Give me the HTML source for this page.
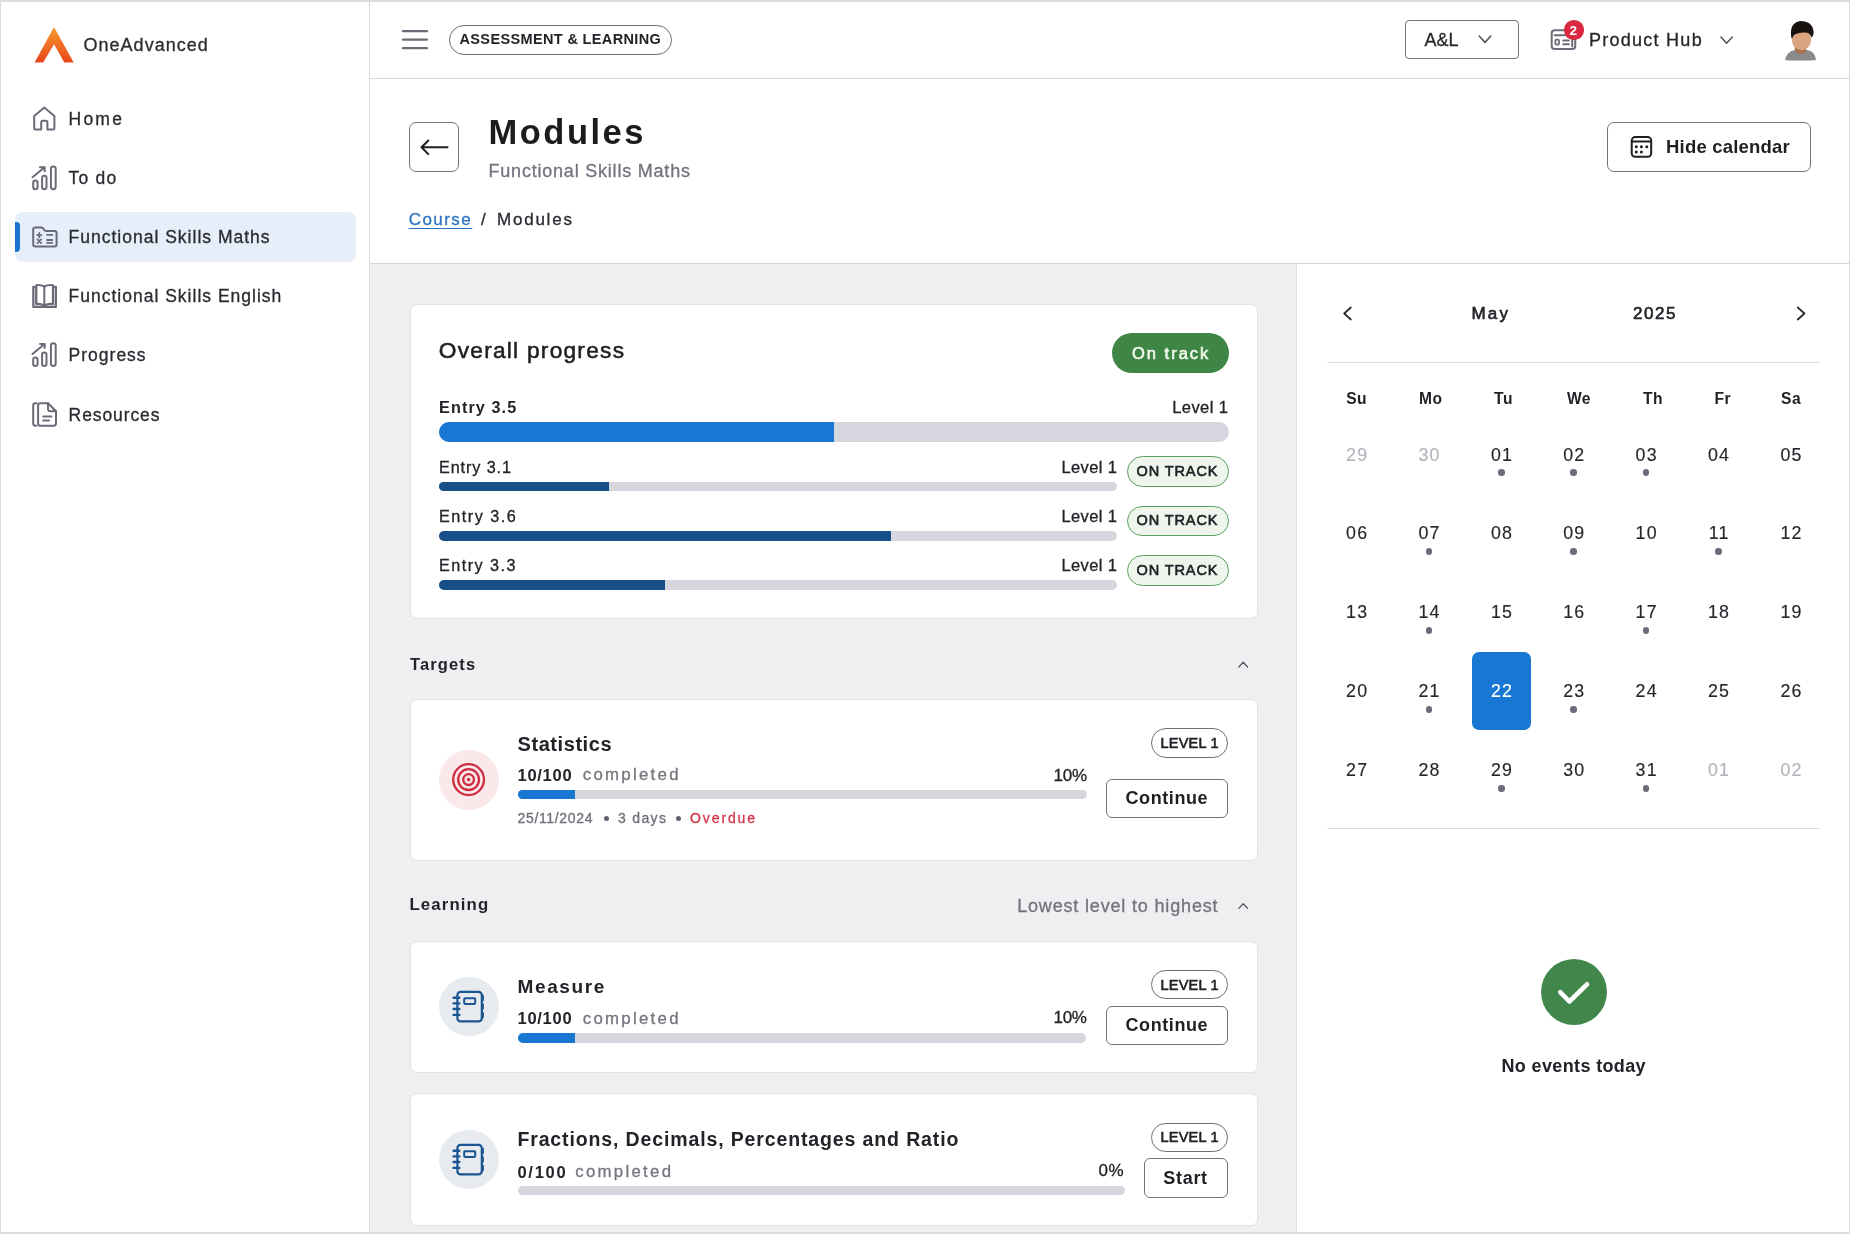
<!DOCTYPE html>
<html>
<head>
<meta charset="utf-8">
<style>
*{box-sizing:border-box;margin:0;padding:0}
html,body{width:1850px;height:1234px;overflow:hidden;background:#fff}
body{position:relative;will-change:transform;font-family:"Liberation Sans",sans-serif;color:#26262c}
.a{position:absolute}
.t{position:absolute;line-height:1;white-space:nowrap}
svg{position:absolute;overflow:visible}
.frame{position:absolute;left:0;top:0;width:1850px;height:1234px;border-style:solid;border-color:#dcdce0;border-width:2px 1px 2px 1px;pointer-events:none;z-index:50}
/* sidebar */
.side{left:0;top:0;width:370px;height:1234px;background:#fff;border-right:1px solid #d9d9de}
.nav{font-size:17.5px;color:#2a2a31;letter-spacing:1px}
/* header */
.hdr{left:370px;top:0;width:1480px;height:79px;background:#fff;border-bottom:1px solid #d6d6db}
.phdr{left:370px;top:79px;width:1480px;height:185px;background:#fff;border-bottom:1px solid #d3d3d8}
.main{left:370px;top:264px;width:926px;height:970px;background:#efeff1}
.cal{left:1296px;top:264px;width:554px;height:970px;background:#fff;border-left:1px solid #e0e0e4}
.card{position:absolute;left:410px;width:848px;background:#fff;border:1px solid #e2e2e6;border-radius:7px}
.track{position:absolute;background:#d6d6df;border-radius:6px;overflow:hidden}
.fill{position:absolute;left:0;top:0;bottom:0}
.btn{position:absolute;border:1.5px solid #74747e;border-radius:6px;background:#fff}
.pill{position:absolute;border:1.5px solid #6e6e78;border-radius:20px;background:#fff}
.t{-webkit-text-stroke:0.3px currentColor}
.sb{font-weight:700;-webkit-text-stroke:0}
</style>
</head>
<body>

<!-- SIDEBAR -->
<div class="a side"></div>
<svg style="left:0;top:0" width="100" height="80">
  <defs><linearGradient id="lg" x1="0" y1="0" x2="0" y2="1"><stop offset="0" stop-color="#f7992c"/><stop offset="1" stop-color="#e8461c"/></linearGradient></defs>
  <path d="M54 27 L73.7 62.6 L64.3 62.6 L54 44.2 L43.2 62.6 L34.6 62.6 Z" fill="url(#lg)"/>
</svg>
<div class="t" style="left:83.6px;top:35.5px;font-size:18px;letter-spacing:1px;color:#2b2b31">OneAdvanced</div>

<div class="a" style="left:15px;top:212px;width:341px;height:50px;background:#e5eef9;border-radius:8px"></div>
<div class="a" style="left:14.8px;top:222px;width:5px;height:30px;background:#1675d2;border-radius:0 3.5px 4px 0"></div>

<!-- nav icons -->
<svg style="left:0;top:0" width="70" height="440" fill="none" stroke="#6b6b78" stroke-width="2" stroke-linejoin="round" stroke-linecap="round">
  <!-- home -->
  <path d="M34.2 116 L44.3 107.5 L54.4 116 L54.4 128.4 Q54.4 129.5 53.3 129.5 L47.4 129.5 L47.4 122.5 Q47.4 120.8 45.7 120.8 L42.9 120.8 Q41.2 120.8 41.2 122.5 L41.2 129.5 L35.3 129.5 Q34.2 129.5 34.2 128.4 Z"/>
  <!-- to do -->
  <rect x="33.2" y="180.6" width="4.4" height="8.6" rx="2.2"/>
  <rect x="42.1" y="175.7" width="4.4" height="13.5" rx="2.2"/>
  <rect x="50.9" y="166.4" width="4.8" height="22.8" rx="2.4"/>
  <path d="M32.5 177.2 L44.6 167.3 M40 167.2 L44.7 167.2 L44.7 171.3"/>
  <!-- folder maths -->
  <path d="M33.2 229.5 Q33.2 227.5 35.2 227.5 L41.5 227.5 Q42.5 227.5 43.3 228.6 L44.3 230 Q45 231 46 231 L54.6 231 Q56.6 231 56.6 233 L56.6 244.5 Q56.6 246.5 54.6 246.5 L35.2 246.5 Q33.2 246.5 33.2 244.5 Z"/>
  <path d="M37.2 235.2 L41.4 235.2 M39.3 233 L39.3 237.4 M37.4 239.4 L41.2 243 M41.2 239.4 L37.4 243 M47 234.8 L52.3 234.8 M47 240 L52.3 240 M47 242.8 L52.3 242.8" stroke-width="1.8"/>
  <!-- book english -->
  <path d="M33.2 286.8 L36.4 286.8 L36.4 303.9 Q40.5 303.5 44.3 305.5 Q48 303.5 52.9 303.9 L52.9 286.8 L56 286.8 L56 306.9 L33.2 306.9 Z" fill="#c7c7d2"/>
  <path d="M36.4 285.2 Q40.5 284.6 44.3 286.5 Q48 284.6 52.9 285.2 L52.9 303.9 Q48 303.3 44.3 305.3 Q40.5 303.3 36.4 303.9 Z" fill="#fff"/>
  <path d="M44.3 286.5 L44.3 305.3"/>
  <!-- progress -->
  <rect x="33.2" y="357.4" width="4.4" height="8.6" rx="2.2"/>
  <rect x="42.1" y="352.5" width="4.4" height="13.5" rx="2.2"/>
  <rect x="50.9" y="343.2" width="4.8" height="22.8" rx="2.4"/>
  <path d="M32.5 354 L44.6 344.1 M40 344 L44.7 344 L44.7 348.1"/>
  <!-- resources -->
  <path d="M36.5 403.2 L35.3 403.2 Q33.2 403.2 33.2 405.3 L33.2 423.6 Q33.2 425.7 35.3 425.7 L36.5 425.7"/>
  <path d="M40.2 403.3 L48 403.3 L56 411.3 L56 423.6 Q56 425.7 53.9 425.7 L40.2 425.7 Q38.1 425.7 38.1 423.6 L38.1 405.4 Q38.1 403.3 40.2 403.3 Z"/>
  <path d="M48 403.3 L48 408.8 Q48 411.3 50.5 411.3 L56 411.3"/>
  <path d="M43.2 416.4 L51.4 416.4 M43.2 420.6 L49 420.6"/>
</svg>

<div class="t nav" style="left:68.6px;top:110.5px;letter-spacing:2.2px">Home</div>
<div class="t nav" style="left:68.6px;top:169.7px;letter-spacing:1.2px">To do</div>
<div class="t nav" style="left:68.6px;top:228.9px">Functional Skills Maths</div>
<div class="t nav" style="left:68.6px;top:288.1px">Functional Skills English</div>
<div class="t nav" style="left:68.6px;top:347.3px">Progress</div>
<div class="t nav" style="left:68.6px;top:406.5px;letter-spacing:0.9px">Resources</div>

<!-- HEADER -->
<div class="a hdr"></div>
<svg style="left:0;top:0" width="440" height="60" stroke="#6b6b78" stroke-width="2.2" stroke-linecap="round">
  <path d="M403 31.2 L427 31.2 M403 39.6 L427 39.6 M403 48.2 L427 48.2"/>
</svg>
<div class="pill" style="left:449px;top:25px;width:223px;height:30px"></div>
<div class="t sb" style="left:459.5px;top:32.4px;font-size:14.5px;letter-spacing:0.36px;color:#222228">ASSESSMENT &amp; LEARNING</div>

<div class="btn" style="left:1405px;top:20px;width:114px;height:39px;border-radius:4px"></div>
<div class="t" style="left:1424.5px;top:30.8px;font-size:18px;color:#26262c">A&amp;L</div>
<svg style="left:0;top:0" width="1850" height="60" fill="none" stroke="#55555f" stroke-width="1.6" stroke-linecap="round" stroke-linejoin="round">
  <path d="M1479.2 36 L1485 42.4 L1490.8 36"/>
  <path d="M1721 37 L1726.6 43.2 L1732.3 37"/>
  <!-- product hub icon -->
  <rect x="1551.7" y="30.3" width="23.6" height="18.7" rx="3" stroke="#6b6b78" stroke-width="2"/>
  <path d="M1554.6 35.3 L1565 35.3 M1563.2 40.4 L1568.8 40.4 M1563.2 44.2 L1568.8 44.2 M1572.2 39.8 L1572.2 46.3" stroke="#6b6b78" stroke-width="2"/>
  <rect x="1555.4" y="39.6" width="3.6" height="5" rx="1" stroke="#6b6b78" stroke-width="1.8"/>
</svg>
<div class="a" style="left:1564.1px;top:20px;width:19.6px;height:19.6px;border-radius:50%;background:#d9283f"></div>
<div class="t sb" style="left:1569.6px;top:24px;font-size:13.5px;color:#fff">2</div>
<div class="t" style="left:1589px;top:30.8px;font-size:18px;letter-spacing:1.26px;color:#26262c">Product Hub</div>

<!-- avatar -->
<svg style="left:1770px;top:10px" width="60" height="60">
  <path d="M15 50 Q17 41 25 40 L37 40 Q45 41 46 50 L46 50 Q44 50.5 30.5 50.5 Q17 50.5 15 50 Z" fill="#8a8a8c"/>
  <path d="M24.5 36 L36.5 36 L36 41.5 Q30.5 46 25 41.5 Z" fill="#a8714f"/>
  <ellipse cx="31.5" cy="30" rx="9.6" ry="10.2" fill="#d9a47f"/>
  <path d="M21 25 Q20 12.5 30.5 11 Q42 10.8 43.5 21 Q43.8 26 41.5 27.5 Q40 23 36 22.5 Q28 22 24 25 Q22.5 27 22 29 Q21 27.5 21 25 Z" fill="#17110f"/>
</svg>

<!-- PAGE HEADER -->
<div class="a phdr"></div>
<div class="btn" style="left:409px;top:122px;width:50px;height:50px;border-radius:7px"></div>
<svg style="left:0;top:0" width="460" height="180" fill="none" stroke="#1f1f24" stroke-width="2" stroke-linecap="round" stroke-linejoin="round">
  <path d="M421.5 147.3 L447.5 147.3 M428.3 140.5 L421.5 147.3 L428.3 154.1"/>
</svg>
<div class="t sb" style="left:488.5px;top:115.3px;font-size:34.5px;letter-spacing:2.5px;color:#1c1c20">Modules</div>
<div class="t" style="left:488.5px;top:161.5px;font-size:18px;letter-spacing:0.79px;color:#73737e">Functional Skills Maths</div>
<div class="t" style="left:408.7px;top:211.4px;font-size:17px;letter-spacing:1.46px;color:#2c73c2;text-decoration:underline;text-underline-offset:3px;text-decoration-thickness:1px">Course</div>
<div class="t" style="left:481px;top:211.4px;font-size:17px;color:#2a2a31">/</div>
<div class="t" style="left:497px;top:211.4px;font-size:17px;letter-spacing:1.77px;color:#2a2a31">Modules</div>

<div class="btn" style="left:1607px;top:122px;width:204px;height:50px;border-radius:7px"></div>
<svg style="left:0;top:0" width="1700" height="180" fill="none" stroke="#1f1f24" stroke-width="2">
  <rect x="1631.7" y="137.1" width="19.5" height="19.6" rx="3.5"/>
  <path d="M1631.7 141.5 L1651.2 141.5"/>
  <g fill="#1f1f24" stroke="none">
    <circle cx="1636.3" cy="146.7" r="1.5"/><circle cx="1641.4" cy="146.7" r="1.5"/><circle cx="1646.8" cy="146.7" r="1.5"/>
    <circle cx="1636.3" cy="152.1" r="1.5"/><circle cx="1641.4" cy="152.1" r="1.5"/>
  </g>
</svg>
<div class="t sb" style="left:1666px;top:137.6px;font-size:18.5px;letter-spacing:0.2px;color:#1f1f24">Hide calendar</div>

<!-- MAIN -->
<div class="a main"></div>

<!-- Overall progress card -->
<div class="card" style="top:304px;height:315px"></div>
<div class="t" style="left:438.8px;top:339px;font-size:22.7px;letter-spacing:1.25px;-webkit-text-stroke:0.55px currentColor;color:#1f1f24">Overall progress</div>
<div class="a" style="left:1112px;top:333px;width:117px;height:40px;border-radius:20px;background:#3f8545"></div>
<div class="t" style="left:1132px;top:345.1px;font-size:16.5px;letter-spacing:2px;-webkit-text-stroke:0.6px currentColor;color:#f1f8ec">On track</div>

<div class="t sb" style="left:439px;top:399.3px;font-size:16.2px;letter-spacing:1.1px;color:#222228">Entry 3.5</div>
<div class="t" style="left:1172.3px;top:399.1px;font-size:16.5px;letter-spacing:0.4px;color:#222228">Level 1</div>
<div class="track" style="left:439px;top:422px;width:790px;height:20px;border-radius:10px"><div class="fill" style="width:395px;background:#1777d2"></div></div>

<div class="t" style="left:439px;top:458.7px;font-size:16.2px;letter-spacing:0.9px;color:#222228">Entry 3.1</div>
<div class="t" style="left:1061.4px;top:458.5px;font-size:16.5px;letter-spacing:0.4px;color:#222228">Level 1</div>
<div class="track" style="left:439px;top:481.5px;width:678px;height:9.5px"><div class="fill" style="width:169.5px;background:#175089"></div></div>
<div class="a" style="left:1127px;top:456px;width:101.5px;height:30.5px;border-radius:16px;background:#eef5ec;border:1.3px solid #5d9f5f"></div>
<div class="t" style="left:1136.5px;top:463.5px;font-size:14.5px;letter-spacing:0.9px;-webkit-text-stroke:0.6px currentColor;color:#222228">ON TRACK</div>

<div class="t" style="left:439px;top:507.9px;font-size:16.2px;letter-spacing:1.5px;color:#222228">Entry 3.6</div>
<div class="t" style="left:1061.4px;top:507.9px;font-size:16.5px;letter-spacing:0.4px;color:#222228">Level 1</div>
<div class="track" style="left:439px;top:531px;width:678px;height:9.5px"><div class="fill" style="width:451.5px;background:#175089"></div></div>
<div class="a" style="left:1127px;top:505.5px;width:101.5px;height:30.5px;border-radius:16px;background:#eef5ec;border:1.3px solid #5d9f5f"></div>
<div class="t" style="left:1136.5px;top:513px;font-size:14.5px;letter-spacing:0.9px;-webkit-text-stroke:0.6px currentColor;color:#222228">ON TRACK</div>

<div class="t" style="left:439px;top:557.3px;font-size:16.2px;letter-spacing:1.45px;color:#222228">Entry 3.3</div>
<div class="t" style="left:1061.4px;top:557.3px;font-size:16.5px;letter-spacing:0.4px;color:#222228">Level 1</div>
<div class="track" style="left:439px;top:580.3px;width:678px;height:9.5px"><div class="fill" style="width:225.5px;background:#175089"></div></div>
<div class="a" style="left:1127px;top:555px;width:101.5px;height:30.5px;border-radius:16px;background:#eef5ec;border:1.3px solid #5d9f5f"></div>
<div class="t" style="left:1136.5px;top:562.5px;font-size:14.5px;letter-spacing:0.9px;-webkit-text-stroke:0.6px currentColor;color:#222228">ON TRACK</div>

<!-- Targets -->
<div class="t sb" style="left:410px;top:656.3px;font-size:16.5px;letter-spacing:1.13px;color:#222228">Targets</div>
<svg style="left:0;top:0" width="1260" height="920" fill="none" stroke="#55555f" stroke-width="1.3" stroke-linecap="round" stroke-linejoin="round">
  <path d="M1238.8 667 L1243.2 662.3 L1247.6 667"/>
  <path d="M1238.8 908.4 L1243.2 903.7 L1247.6 908.4"/>
</svg>
<div class="card" style="top:699px;height:162px"></div>
<div class="a" style="left:439px;top:750px;width:59.5px;height:59.5px;border-radius:50%;background:#fbe8ea"></div>
<svg style="left:0;top:0" width="520" height="820" fill="none" stroke="#cd2f40" stroke-width="2.3">
  <circle cx="468.6" cy="779.6" r="15.4"/>
  <circle cx="468.6" cy="779.6" r="10.4"/>
  <circle cx="468.6" cy="779.6" r="5.4"/>
  <circle cx="468.6" cy="779.6" r="1.8" fill="#cd2f40" stroke="none"/>
</svg>
<div class="t sb" style="left:517.5px;top:734.4px;font-size:20px;letter-spacing:0.57px;color:#222228">Statistics</div>
<div class="t sb" style="left:517.5px;top:766.5px;font-size:16.5px;letter-spacing:0.72px;color:#222228">10/100</div>
<div class="t" style="left:582.7px;top:767.2px;font-size:16.8px;letter-spacing:2.3px;color:#75757f">completed</div>
<div class="t" style="left:1053.6px;top:766.7px;font-size:17px;letter-spacing:-0.3px;color:#222228">10%</div>
<div class="track" style="left:518px;top:789.7px;width:568.5px;height:9.5px"><div class="fill" style="width:57px;background:#1777d2"></div></div>
<div class="t" style="left:517.5px;top:810.7px;font-size:14px;letter-spacing:0.66px;color:#6f6f79">25/11/2024</div>
<div class="a" style="left:604.2px;top:815.7px;width:5px;height:5px;border-radius:50%;background:#62626e"></div>
<div class="t" style="left:618px;top:810.7px;font-size:14px;letter-spacing:1.34px;color:#6f6f79">3 days</div>
<div class="a" style="left:675.5px;top:815.7px;width:5px;height:5px;border-radius:50%;background:#62626e"></div>
<div class="t" style="left:690px;top:810.7px;font-size:14px;letter-spacing:1.9px;color:#d33447">Overdue</div>
<div class="pill" style="left:1151px;top:728px;width:77px;height:29.5px;border-width:1.3px"></div>
<div class="t" style="left:1160.6px;top:735.8px;font-size:14.5px;letter-spacing:0.2px;-webkit-text-stroke:0.6px currentColor;color:#222228">LEVEL 1</div>
<div class="btn" style="left:1106px;top:779px;width:122px;height:39px"></div>
<div class="t sb" style="left:1125.5px;top:789.1px;font-size:18px;letter-spacing:0.59px;color:#1f1f24">Continue</div>

<!-- Learning -->
<div class="t sb" style="left:409.4px;top:897.4px;font-size:16.8px;letter-spacing:1.14px;color:#222228">Learning</div>
<div class="t" style="left:1017.2px;top:896.8px;font-size:18px;letter-spacing:0.83px;color:#73737d">Lowest level to highest</div>

<div class="card" style="top:940.5px;height:132px"></div>
<div class="a" style="left:439px;top:977px;width:59.5px;height:59px;border-radius:50%;background:#e7ebf0"></div>

<div class="t sb" style="left:517.5px;top:976.7px;font-size:19px;letter-spacing:1.63px;color:#222228">Measure</div>
<div class="t sb" style="left:517.5px;top:1010px;font-size:16.5px;letter-spacing:0.72px;color:#222228">10/100</div>
<div class="t" style="left:582.7px;top:1010.7px;font-size:16.8px;letter-spacing:2.3px;color:#75757f">completed</div>
<div class="t" style="left:1053.5px;top:1009px;font-size:17px;letter-spacing:-0.3px;color:#222228">10%</div>
<div class="track" style="left:518px;top:1033px;width:568px;height:9.5px"><div class="fill" style="width:57px;background:#1777d2"></div></div>
<div class="pill" style="left:1151px;top:970px;width:77px;height:29px;border-width:1.3px"></div>
<div class="t" style="left:1160.6px;top:977.5px;font-size:14.5px;letter-spacing:0.2px;-webkit-text-stroke:0.6px currentColor;color:#222228">LEVEL 1</div>
<div class="btn" style="left:1106px;top:1005.5px;width:122px;height:39px"></div>
<div class="t sb" style="left:1125.5px;top:1016.2px;font-size:18px;letter-spacing:0.59px;color:#1f1f24">Continue</div>

<div class="card" style="top:1093px;height:133px"></div>
<div class="a" style="left:439px;top:1130px;width:59.5px;height:59px;border-radius:50%;background:#e7ebf0"></div>
<svg style="left:0;top:0" width="520" height="1234" fill="none" stroke="#1b5591" stroke-width="2.2" stroke-linecap="round" stroke-linejoin="round">
  <g>
    <rect x="457.4" y="991.8" width="24.4" height="29.6" rx="3.2"/>
    <rect x="464.2" y="998.3" width="11" height="5.6" rx="0.8" stroke-width="2"/>
    <path d="M453.6 997.8 L459.3 997.8 M453.6 1003.4 L459.3 1003.4 M453.6 1009 L459.3 1009 M453.6 1014.9 L459.3 1014.9" stroke-width="2.4"/>
    <path d="M482.6 996 L482.6 1000 M482.6 1004.5 L482.6 1008.5 M482.6 1013 L482.6 1017" stroke-width="2.6"/>
  </g>
  <g transform="translate(0,153)">
    <rect x="457.4" y="991.8" width="24.4" height="29.6" rx="3.2"/>
    <rect x="464.2" y="998.3" width="11" height="5.6" rx="0.8" stroke-width="2"/>
    <path d="M453.6 997.8 L459.3 997.8 M453.6 1003.4 L459.3 1003.4 M453.6 1009 L459.3 1009 M453.6 1014.9 L459.3 1014.9" stroke-width="2.4"/>
    <path d="M482.6 996 L482.6 1000 M482.6 1004.5 L482.6 1008.5 M482.6 1013 L482.6 1017" stroke-width="2.6"/>
  </g>
</svg>
<div class="t sb" style="left:517.4px;top:1130.4px;font-size:19.5px;letter-spacing:0.87px;color:#222228">Fractions, Decimals, Percentages and Ratio</div>
<div class="t sb" style="left:517.4px;top:1163.8px;font-size:16.5px;letter-spacing:1.75px;color:#222228">0/100</div>
<div class="t" style="left:575.2px;top:1164.3px;font-size:16.8px;letter-spacing:2.3px;color:#75757f">completed</div>
<div class="t" style="left:1098.5px;top:1162.2px;font-size:17px;letter-spacing:0.5px;color:#222228">0%</div>
<div class="track" style="left:518px;top:1185.8px;width:606.5px;height:9px"></div>
<div class="pill" style="left:1151px;top:1122.5px;width:77px;height:29.5px;border-width:1.3px"></div>
<div class="t" style="left:1160.6px;top:1130.1px;font-size:14.5px;letter-spacing:0.2px;-webkit-text-stroke:0.6px currentColor;color:#222228">LEVEL 1</div>
<div class="btn" style="left:1144px;top:1158.3px;width:84px;height:39.5px"></div>
<div class="t sb" style="left:1163.3px;top:1168.8px;font-size:18px;letter-spacing:0.7px;color:#1f1f24">Start</div>

<!-- CALENDAR -->
<div class="a cal"></div>
<svg style="left:0;top:0" width="1850" height="340" fill="none" stroke="#2a2a31" stroke-width="1.8" stroke-linecap="round" stroke-linejoin="round">
  <path d="M1350.8 307.5 L1344.2 313.5 L1350.8 319.5"/>
  <path d="M1797.8 307.5 L1804.4 313.5 L1797.8 319.5"/>
</svg>
<div class="t" style="left:1471.4px;top:305.2px;font-size:17px;letter-spacing:2.3px;-webkit-text-stroke:0.6px currentColor;color:#222228">May</div>
<div class="t" style="left:1632.9px;top:305.2px;font-size:17px;letter-spacing:1.6px;-webkit-text-stroke:0.6px currentColor;color:#222228">2025</div>
<div class="a" style="left:1327px;top:362px;width:493px;height:1px;background:#dcdce0"></div>
<div class="a" style="left:1327px;top:828px;width:493px;height:1px;background:#dcdce0"></div>

<div class="t sb" style="left:1316.6px;width:80px;text-align:center;top:390.7px;font-size:15.6px;letter-spacing:0.5px;color:#222228">Su</div>
<div class="t sb" style="left:1390.7px;width:80px;text-align:center;top:390.7px;font-size:15.6px;letter-spacing:0.5px;color:#222228">Mo</div>
<div class="t sb" style="left:1463.5px;width:80px;text-align:center;top:390.7px;font-size:15.6px;letter-spacing:0.5px;color:#222228">Tu</div>
<div class="t sb" style="left:1539px;width:80px;text-align:center;top:390.7px;font-size:15.6px;letter-spacing:0.5px;color:#222228">We</div>
<div class="t sb" style="left:1613px;width:80px;text-align:center;top:390.7px;font-size:15.6px;letter-spacing:0.5px;color:#222228">Th</div>
<div class="t sb" style="left:1682.8px;width:80px;text-align:center;top:390.7px;font-size:15.6px;letter-spacing:0.5px;color:#222228">Fr</div>
<div class="t sb" style="left:1751.1px;width:80px;text-align:center;top:390.7px;font-size:15.6px;letter-spacing:0.5px;color:#222228">Sa</div>
<div class="t" style="left:1316.6px;width:80px;text-align:center;top:446.5px;font-size:17.8px;letter-spacing:1.2px;text-indent:1.2px;-webkit-text-stroke:0.15px currentColor;color:#b3b3bb">29</div>
<div class="t" style="left:1389.0px;width:80px;text-align:center;top:446.5px;font-size:17.8px;letter-spacing:1.2px;text-indent:1.2px;-webkit-text-stroke:0.15px currentColor;color:#b3b3bb">30</div>
<div class="t" style="left:1461.4px;width:80px;text-align:center;top:446.5px;font-size:17.8px;letter-spacing:1.2px;text-indent:1.2px;-webkit-text-stroke:0.15px currentColor;color:#26262c">01</div>
<div class="a" style="left:1498.1px;top:469.2px;width:6.6px;height:6.6px;border-radius:50%;background:#6b6b7b"></div>
<div class="t" style="left:1533.7px;width:80px;text-align:center;top:446.5px;font-size:17.8px;letter-spacing:1.2px;text-indent:1.2px;-webkit-text-stroke:0.15px currentColor;color:#26262c">02</div>
<div class="a" style="left:1570.4px;top:469.2px;width:6.6px;height:6.6px;border-radius:50%;background:#6b6b7b"></div>
<div class="t" style="left:1606.1px;width:80px;text-align:center;top:446.5px;font-size:17.8px;letter-spacing:1.2px;text-indent:1.2px;-webkit-text-stroke:0.15px currentColor;color:#26262c">03</div>
<div class="a" style="left:1642.8px;top:469.2px;width:6.6px;height:6.6px;border-radius:50%;background:#6b6b7b"></div>
<div class="t" style="left:1678.5px;width:80px;text-align:center;top:446.5px;font-size:17.8px;letter-spacing:1.2px;text-indent:1.2px;-webkit-text-stroke:0.15px currentColor;color:#26262c">04</div>
<div class="t" style="left:1750.9px;width:80px;text-align:center;top:446.5px;font-size:17.8px;letter-spacing:1.2px;text-indent:1.2px;-webkit-text-stroke:0.15px currentColor;color:#26262c">05</div>
<div class="t" style="left:1316.6px;width:80px;text-align:center;top:525.4px;font-size:17.8px;letter-spacing:1.2px;text-indent:1.2px;-webkit-text-stroke:0.15px currentColor;color:#26262c">06</div>
<div class="t" style="left:1389.0px;width:80px;text-align:center;top:525.4px;font-size:17.8px;letter-spacing:1.2px;text-indent:1.2px;-webkit-text-stroke:0.15px currentColor;color:#26262c">07</div>
<div class="a" style="left:1425.7px;top:548.1px;width:6.6px;height:6.6px;border-radius:50%;background:#6b6b7b"></div>
<div class="t" style="left:1461.4px;width:80px;text-align:center;top:525.4px;font-size:17.8px;letter-spacing:1.2px;text-indent:1.2px;-webkit-text-stroke:0.15px currentColor;color:#26262c">08</div>
<div class="t" style="left:1533.7px;width:80px;text-align:center;top:525.4px;font-size:17.8px;letter-spacing:1.2px;text-indent:1.2px;-webkit-text-stroke:0.15px currentColor;color:#26262c">09</div>
<div class="a" style="left:1570.4px;top:548.1px;width:6.6px;height:6.6px;border-radius:50%;background:#6b6b7b"></div>
<div class="t" style="left:1606.1px;width:80px;text-align:center;top:525.4px;font-size:17.8px;letter-spacing:1.2px;text-indent:1.2px;-webkit-text-stroke:0.15px currentColor;color:#26262c">10</div>
<div class="t" style="left:1678.5px;width:80px;text-align:center;top:525.4px;font-size:17.8px;letter-spacing:1.2px;text-indent:1.2px;-webkit-text-stroke:0.15px currentColor;color:#26262c">11</div>
<div class="a" style="left:1715.2px;top:548.1px;width:6.6px;height:6.6px;border-radius:50%;background:#6b6b7b"></div>
<div class="t" style="left:1750.9px;width:80px;text-align:center;top:525.4px;font-size:17.8px;letter-spacing:1.2px;text-indent:1.2px;-webkit-text-stroke:0.15px currentColor;color:#26262c">12</div>
<div class="t" style="left:1316.6px;width:80px;text-align:center;top:604.4px;font-size:17.8px;letter-spacing:1.2px;text-indent:1.2px;-webkit-text-stroke:0.15px currentColor;color:#26262c">13</div>
<div class="t" style="left:1389.0px;width:80px;text-align:center;top:604.4px;font-size:17.8px;letter-spacing:1.2px;text-indent:1.2px;-webkit-text-stroke:0.15px currentColor;color:#26262c">14</div>
<div class="a" style="left:1425.7px;top:627.1px;width:6.6px;height:6.6px;border-radius:50%;background:#6b6b7b"></div>
<div class="t" style="left:1461.4px;width:80px;text-align:center;top:604.4px;font-size:17.8px;letter-spacing:1.2px;text-indent:1.2px;-webkit-text-stroke:0.15px currentColor;color:#26262c">15</div>
<div class="t" style="left:1533.7px;width:80px;text-align:center;top:604.4px;font-size:17.8px;letter-spacing:1.2px;text-indent:1.2px;-webkit-text-stroke:0.15px currentColor;color:#26262c">16</div>
<div class="t" style="left:1606.1px;width:80px;text-align:center;top:604.4px;font-size:17.8px;letter-spacing:1.2px;text-indent:1.2px;-webkit-text-stroke:0.15px currentColor;color:#26262c">17</div>
<div class="a" style="left:1642.8px;top:627.1px;width:6.6px;height:6.6px;border-radius:50%;background:#6b6b7b"></div>
<div class="t" style="left:1678.5px;width:80px;text-align:center;top:604.4px;font-size:17.8px;letter-spacing:1.2px;text-indent:1.2px;-webkit-text-stroke:0.15px currentColor;color:#26262c">18</div>
<div class="t" style="left:1750.9px;width:80px;text-align:center;top:604.4px;font-size:17.8px;letter-spacing:1.2px;text-indent:1.2px;-webkit-text-stroke:0.15px currentColor;color:#26262c">19</div>
<div class="t" style="left:1316.6px;width:80px;text-align:center;top:683.4px;font-size:17.8px;letter-spacing:1.2px;text-indent:1.2px;-webkit-text-stroke:0.15px currentColor;color:#26262c">20</div>
<div class="t" style="left:1389.0px;width:80px;text-align:center;top:683.4px;font-size:17.8px;letter-spacing:1.2px;text-indent:1.2px;-webkit-text-stroke:0.15px currentColor;color:#26262c">21</div>
<div class="a" style="left:1425.7px;top:706.1px;width:6.6px;height:6.6px;border-radius:50%;background:#6b6b7b"></div>
<div class="a" style="left:1471.5px;top:651.5px;width:59.5px;height:78.5px;border-radius:7px;background:#1777d3"></div>
<div class="t" style="left:1461.4px;width:80px;text-align:center;top:683.4px;font-size:17.8px;letter-spacing:1.2px;text-indent:1.2px;-webkit-text-stroke:0.15px currentColor;color:#ffffff">22</div>
<div class="t" style="left:1533.7px;width:80px;text-align:center;top:683.4px;font-size:17.8px;letter-spacing:1.2px;text-indent:1.2px;-webkit-text-stroke:0.15px currentColor;color:#26262c">23</div>
<div class="a" style="left:1570.4px;top:706.1px;width:6.6px;height:6.6px;border-radius:50%;background:#6b6b7b"></div>
<div class="t" style="left:1606.1px;width:80px;text-align:center;top:683.4px;font-size:17.8px;letter-spacing:1.2px;text-indent:1.2px;-webkit-text-stroke:0.15px currentColor;color:#26262c">24</div>
<div class="t" style="left:1678.5px;width:80px;text-align:center;top:683.4px;font-size:17.8px;letter-spacing:1.2px;text-indent:1.2px;-webkit-text-stroke:0.15px currentColor;color:#26262c">25</div>
<div class="t" style="left:1750.9px;width:80px;text-align:center;top:683.4px;font-size:17.8px;letter-spacing:1.2px;text-indent:1.2px;-webkit-text-stroke:0.15px currentColor;color:#26262c">26</div>
<div class="t" style="left:1316.6px;width:80px;text-align:center;top:762.4px;font-size:17.8px;letter-spacing:1.2px;text-indent:1.2px;-webkit-text-stroke:0.15px currentColor;color:#26262c">27</div>
<div class="t" style="left:1389.0px;width:80px;text-align:center;top:762.4px;font-size:17.8px;letter-spacing:1.2px;text-indent:1.2px;-webkit-text-stroke:0.15px currentColor;color:#26262c">28</div>
<div class="t" style="left:1461.4px;width:80px;text-align:center;top:762.4px;font-size:17.8px;letter-spacing:1.2px;text-indent:1.2px;-webkit-text-stroke:0.15px currentColor;color:#26262c">29</div>
<div class="a" style="left:1498.1px;top:785.1px;width:6.6px;height:6.6px;border-radius:50%;background:#6b6b7b"></div>
<div class="t" style="left:1533.7px;width:80px;text-align:center;top:762.4px;font-size:17.8px;letter-spacing:1.2px;text-indent:1.2px;-webkit-text-stroke:0.15px currentColor;color:#26262c">30</div>
<div class="t" style="left:1606.1px;width:80px;text-align:center;top:762.4px;font-size:17.8px;letter-spacing:1.2px;text-indent:1.2px;-webkit-text-stroke:0.15px currentColor;color:#26262c">31</div>
<div class="a" style="left:1642.8px;top:785.1px;width:6.6px;height:6.6px;border-radius:50%;background:#6b6b7b"></div>
<div class="t" style="left:1678.5px;width:80px;text-align:center;top:762.4px;font-size:17.8px;letter-spacing:1.2px;text-indent:1.2px;-webkit-text-stroke:0.15px currentColor;color:#b3b3bb">01</div>
<div class="t" style="left:1750.9px;width:80px;text-align:center;top:762.4px;font-size:17.8px;letter-spacing:1.2px;text-indent:1.2px;-webkit-text-stroke:0.15px currentColor;color:#b3b3bb">02</div>
<div class="a" style="left:1540.5px;top:958.6px;width:66.2px;height:66.2px;border-radius:50%;background:#41864a"></div>
<svg style="left:0;top:0" width="1850" height="1100" fill="none" stroke="#fff" stroke-width="4.6" stroke-linecap="round" stroke-linejoin="round">
  <path d="M1560.2 992.2 L1569.4 1001.5 L1587 984.3"/>
</svg>
<div class="t sb" style="left:1501.5px;top:1056.9px;font-size:18px;letter-spacing:0.36px;color:#222228">No events today</div>

<div class="frame"></div>
</body>
</html>
